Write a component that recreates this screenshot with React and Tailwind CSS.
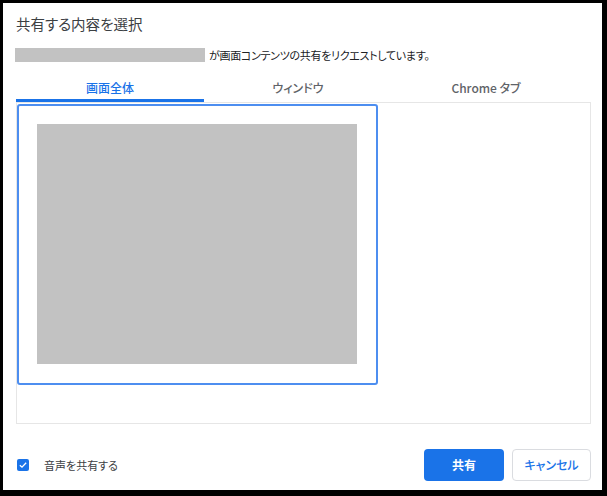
import { useState } from 'react'

const font = "font-['Segoe_UI','Noto_Sans_CJK_JP',sans-serif] [font-feature-settings:'palt']"

const tabs = ['画面全体', 'ウィンドウ', 'Chrome タブ']

export default function App() {
  const [active, setActive] = useState(0)
  const [audio, setAudio] = useState(true)

  return (
    <div className={`w-[607px] h-[496px] bg-black pt-[3px] pl-[3px] pr-[5px] pb-[6px] ${font}`}>
      <div className="w-full h-full bg-white flex flex-col pl-[13px] pr-[11px] pt-[11px] pb-[9px]">
        <h2 className="text-[14.5px] leading-[20px] text-[#3c4043]">共有する内容を選択</h2>

        <div className="mt-[14px] flex items-center h-[14px]">
          <div className="w-[190px] h-[14px] bg-[#c2c2c2] -ml-px" />
          <span className="ml-[4px] text-[11px] leading-[14px] tracking-[-0.3px] text-[#202124]">
            が画面コンテンツの共有をリクエストしています。
          </span>
        </div>

        <div className="mt-[15px] flex border-b border-[#e6e6e6]">
          {tabs.map((t, i) => (
            <button
              key={t}
              onClick={() => setActive(i)}
              className="w-[188px] h-[25px] flex flex-col"
            >
              <span
                className={`flex-1 flex items-center justify-center text-[12px] ${
                  i === active ? 'text-[#1a73e8] font-medium' : 'text-[#5f6368] font-medium'
                }`}
              >
                {t}
              </span>
              <span className={`h-[3px] w-full ${i === active ? 'bg-[#1a73e8]' : ''}`} />
            </button>
          ))}
        </div>

        <div className="h-[321px] border-x border-b border-[#e6e6e6] pt-px">
          <div className="w-[361px] h-[281px] border-2 border-[#4d8ef0] rounded-[3px] p-[18px]">
            <div className="w-[320px] h-[240px] bg-[#c2c2c2]" />
          </div>
        </div>

        <div className="mt-[25px] flex items-center">
          <button
            onClick={() => setAudio(!audio)}
            className={`ml-px w-[12px] h-[12px] rounded-[2px] flex items-center justify-center ${
              audio ? 'bg-[#1a73e8]' : 'border border-[#5f6368]'
            }`}
          >
            {audio && (
              <svg viewBox="0 0 12 12" className="w-[10px] h-[10px]">
                <path d="M2.2 6.2 L4.8 8.6 L9.8 3.4" fill="none" stroke="white" strokeWidth="1.6" />
              </svg>
            )}
          </button>
          <span className="ml-[15px] text-[11px] text-[#3c4043]">音声を共有する</span>

          <div className="ml-auto flex gap-[8px]">
            <button className="w-[80px] h-[32px] rounded-[4px] bg-[#1a73e8] text-white text-[12px] font-bold">
              共有
            </button>
            <button className="w-[79px] h-[32px] rounded-[4px] border border-[#dadce0] bg-white text-[#1a73e8] text-[12px] font-medium">
              キャンセル
            </button>
          </div>
        </div>
      </div>
    </div>
  )
}
